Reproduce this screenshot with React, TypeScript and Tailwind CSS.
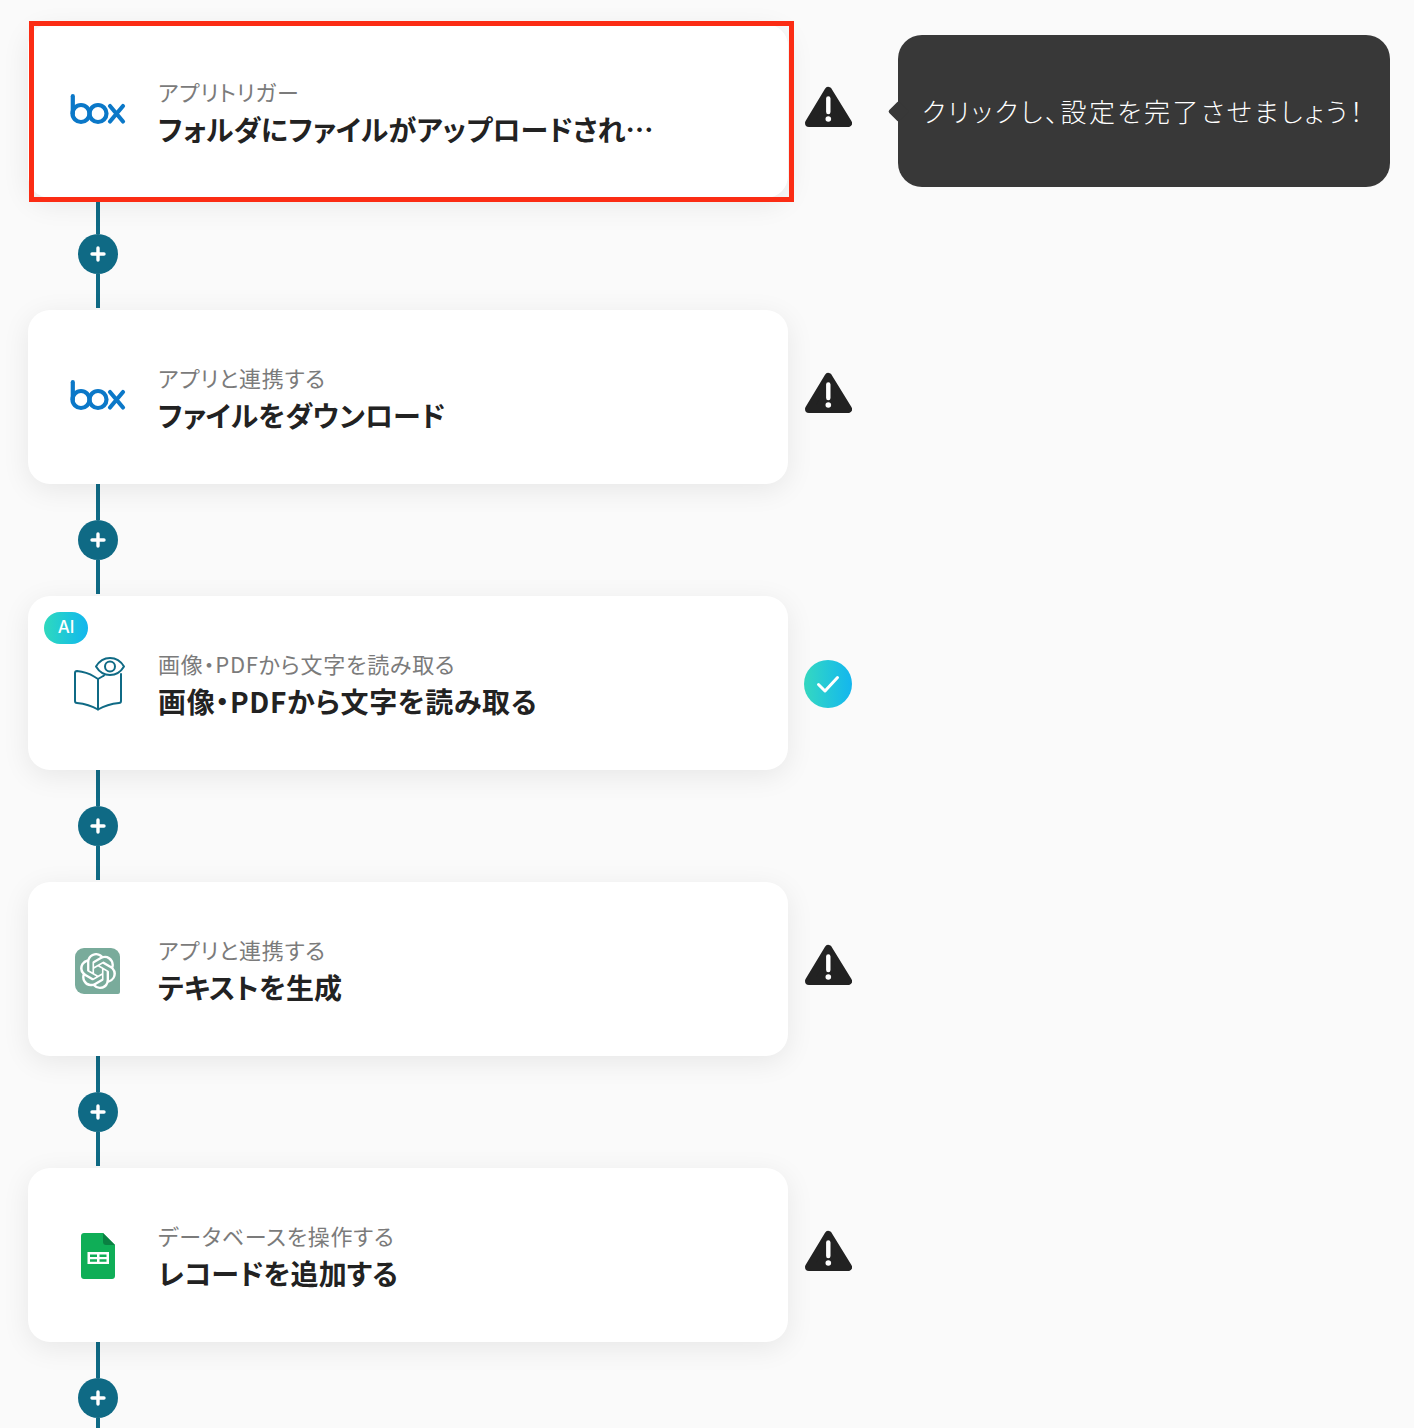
import React from "react";
import { SiOpenai } from "react-icons/si";

interface Step {
  id: number;
  icon: "box" | "book" | "gpt" | "sheets";
  label: string;
  title: string;
  done?: boolean;
  ai?: boolean;
  selected?: boolean;
}

const steps: Step[] = [
  { id: 1, icon: "box", label: "アプリトリガー", title: "フォルダにファイルがアップロードされ…", selected: true },
  { id: 2, icon: "box", label: "アプリと連携する", title: "ファイルをダウンロード" },
  { id: 3, icon: "book", label: "画像・PDFから文字を読み取る", title: "画像・PDFから文字を読み取る", done: true, ai: true },
  { id: 4, icon: "gpt", label: "アプリと連携する", title: "テキストを生成" },
  { id: 5, icon: "sheets", label: "データベースを操作する", title: "レコードを追加する" },
];

const BoxLogo = () => (
  <svg className="mb-0.5" width="56" height="32" viewBox="0 0 56 32" fill="none" stroke="#0b78c8" strokeWidth="4.2" strokeLinecap="round">
    <path d="M2.8 2.2V19.5" />
    <circle cx="11" cy="19.5" r="8.5" />
    <circle cx="28" cy="19.5" r="8.5" />
    <path d="M40 12L53 27.5M53 12L40 27.5" />
  </svg>
);

const BookIcon = () => (
  <svg width="56" height="60" viewBox="0 0 56 60" fill="none" stroke="#0f6a85" strokeWidth="2" strokeLinejoin="round" strokeLinecap="round">
    <path d="M28 26L24 23.5C20 21 12 18.5 7 18C5.8 18 5 18.8 5 20V48C5 49.2 5.8 50 7 50C13 50.6 22 53 28 56.5C34 53 43 50.6 49 50C50.2 50 51 49.2 51 48V21" />
    <path d="M28 26V56.5" />
    <path d="M28 26L34 22.5" />
    <path d="M26 13.5C29 8.5 34 5 40 5C46 5 51 8.5 54 13.5C51 18.5 46 22 40 22C34 22 29 18.5 26 13.5Z" fill="#fff" />
    <circle cx="40" cy="13.5" r="5" />
  </svg>
);

const GptLogo = () => (
  <div className="ml-[5px] mt-[3px] flex h-[46px] w-[45px] items-center justify-center rounded-t-[9px] rounded-bl-[9px] rounded-br-[2px] bg-[#79ab9b]">
    <SiOpenai className="text-white" size={36} />
  </div>
);

const SheetsLogo = () => (
  <svg className="ml-[11px] mt-0.5" width="34" height="46" viewBox="0 0 34 46">
    <path d="M3 0H22L34 12V43C34 44.7 32.7 46 31 46H3C1.3 46 0 44.7 0 43V3C0 1.3 1.3 0 3 0Z" fill="#0fae57" />
    <path d="M22 0L34 12H25C23.3 12 22 10.7 22 9V0Z" fill="#0a8042" />
    <path d="M6.5 19H28V31H6.5ZM9 21.5V24H16V21.5ZM18.5 21.5V24H25.5V21.5ZM9 26.2V28.7H16V26.2ZM18.5 26.2V28.7H25.5V26.2Z" fill="#fff" fillRule="evenodd" />
  </svg>
);

const WarningIcon = () => (
  <svg className="mb-2" width="48" height="42" viewBox="0 0 48 42">
    <path d="M24.3 5L44 37H5Z" fill="#222" stroke="#222" strokeWidth="8" strokeLinejoin="round" />
    <path d="M24.3 12.5V26" stroke="#fff" strokeWidth="4.4" strokeLinecap="round" />
    <circle cx="24.3" cy="33" r="2.8" fill="#fff" />
  </svg>
);

const CheckIcon = () => (
  <div className="mt-0.5 flex h-12 w-12 items-center justify-center rounded-full bg-gradient-to-r from-[#35d8c0] to-[#14b6ee]">
    <svg width="26" height="26" viewBox="0 0 26 26" fill="none" stroke="#fff" strokeWidth="3" strokeLinecap="round" strokeLinejoin="round">
      <path d="M3.5 13.5L10 20L22.5 6.5" />
    </svg>
  </div>
);

const Connector = () => (
  <div className="ml-[50px] flex w-10 flex-col items-center pb-0.5">
    <div className="h-9 w-1 bg-[#0f6a85]" />
    <div className="flex h-10 w-10 items-center justify-center rounded-full bg-[#0f6a85]">
      <svg width="16" height="16" viewBox="0 0 16 16" stroke="#fff" strokeWidth="3.4" strokeLinecap="round">
        <path d="M8 2V14M2 8H14" />
      </svg>
    </div>
    <div className="h-[34px] w-1 bg-[#0f6a85]" />
  </div>
);

const StepCard: React.FC<{ step: Step }> = ({ step }) => (
  <div className="relative flex h-[174px] w-[760px] items-center gap-8 rounded-[22px] bg-white pl-[42px] shadow-[0_6px_28px_rgba(0,0,0,0.08)]">
    {step.ai && (
      <span className="absolute left-4 top-4 flex h-8 w-11 items-center justify-center rounded-full bg-gradient-to-r from-[#2fd9bd] to-[#14b6ee] font-['Inter',sans-serif] text-[17px] font-medium text-white">
        AI
      </span>
    )}
    <div className="flex w-14 shrink-0 items-center">
      {step.icon === "box" && <BoxLogo />}
      {step.icon === "book" && <BookIcon />}
      {step.icon === "gpt" && <GptLogo />}
      {step.icon === "sheets" && <SheetsLogo />}
    </div>
    <div className="flex flex-col pb-0.5 [font-feature-settings:'palt']">
      <span className="text-[22px] leading-[38px] tracking-[0.75px] text-[#7b7b7b]">{step.label}</span>
      <span
        className={
          step.ai
            ? "text-[28px] font-bold leading-[38px] tracking-[0.65px] text-[#222]"
            : "text-[28px] font-bold leading-[38px] tracking-[0.1px] text-[#222]"
        }
      >
        {step.title}
      </span>
    </div>
    {step.selected && (
      <div className="absolute left-px -top-[3px] h-[181px] w-[765px] border-[5px] border-[#fb2c14]" />
    )}
  </div>
);

export default function App() {
  return (
    <div className="relative h-[1428px] w-[1414px] overflow-hidden bg-[#fafafa] pl-7 pt-6 font-['Noto_Sans_CJK_JP','Noto_Sans',sans-serif]">
      {steps.map((step) => (
        <div key={step.id}>
          <div className="flex items-center gap-4">
            <StepCard step={step} />
            {step.done ? <CheckIcon /> : <WarningIcon />}
            {step.selected && (
              <div className="absolute left-[898px] top-[35px] flex h-[152px] w-[492px] items-center rounded-3xl bg-[#383838] pb-0.5 pl-6 text-[26px] font-light tracking-[2.5px] text-white [font-feature-settings:'palt']">
                <span className="absolute -left-[7px] top-[69px] h-[15px] w-[15px] rotate-45 rounded-[2px] bg-[#383838]" />
                クリックし、設定を完了させましょう！
              </div>
            )}
          </div>
          <Connector />
        </div>
      ))}
    </div>
  );
}
